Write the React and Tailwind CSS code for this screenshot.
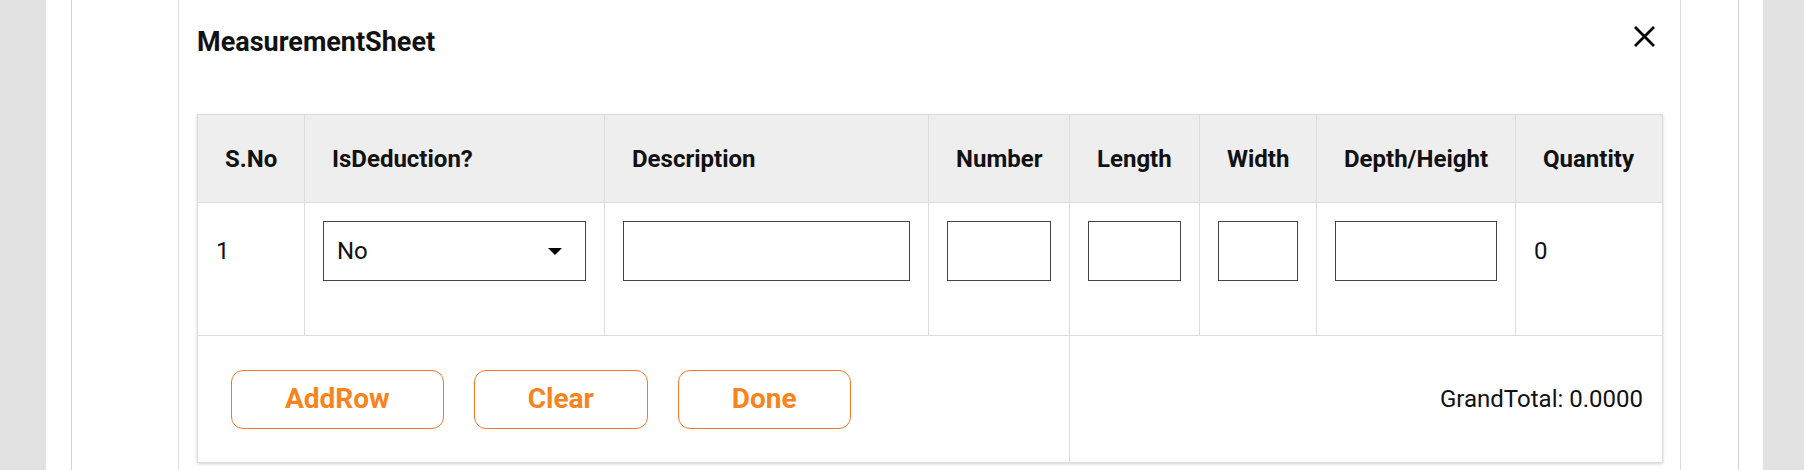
import React from 'react';

const cols = [
  { label: 'S.No', w: 'w-[107px]' },
  { label: 'IsDeduction?', w: 'w-[300px]' },
  { label: 'Description', w: 'w-[324px]' },
  { label: 'Number', w: 'w-[141px]' },
  { label: 'Length', w: 'w-[130px]' },
  { label: 'Width', w: 'w-[117px]' },
  { label: 'Depth/Height', w: 'w-[199px]' },
  { label: 'Quantity', w: 'w-[147px]' },
];

function TextBox() {
  return <input type="text" className="block w-full h-[60px] border border-[#444444] bg-white outline-none" />;
}

export default function App() {
  return (
    <div className="h-[470px] w-[1804px] overflow-hidden bg-[#e2e2e2] flex font-['Roboto','Liberation_Sans',sans-serif] text-[#111111]">
      <div className="ml-[46px] w-[1717px] bg-white flex">
        <div className="ml-[25px] w-[1668px] border-x border-[#d4d4d4] flex">
          <div className="ml-[106px] w-[1503px] border-x border-[#dadada] px-[18px]">
            <div className="flex items-start justify-between pt-[22px]">
              <h1 className="text-[27px] leading-[40px] font-bold">MeasurementSheet</h1>
              <button className="mt-[4px] mr-[7px]">
                <svg width="21" height="21" viewBox="0 0 21 21" fill="none" stroke="#000" strokeWidth="2.8">
                  <path d="M1 1 L20 20 M20 1 L1 20" />
                </svg>
              </button>
            </div>

            <table className="mt-[52px] w-[1465px] table-fixed border-collapse shadow-[0_1px_3px_rgba(0,0,0,0.18)]">
              <colgroup>
                {cols.map((c) => (
                  <col key={c.label} className={c.w} />
                ))}
              </colgroup>
              <thead>
                <tr className="bg-[#eeeeee] h-[88px]">
                  {cols.map((c) => (
                    <th key={c.label} className="border border-[#dddddd] px-[27px] text-left text-[24px] font-bold leading-[36px] whitespace-nowrap">
                      {c.label}
                    </th>
                  ))}
                </tr>
              </thead>
              <tbody>
                <tr className="h-[133px]">
                  <td className="border border-[#dddddd] p-[18px] align-top">
                    <div className="h-[60px] flex items-center text-[24px]">1</div>
                  </td>
                  <td className="border border-[#dddddd] p-[18px] align-top">
                    <div className="h-[60px] w-full border border-[#444444] flex items-center justify-between pl-[13px] pr-[23px] text-[24px]">
                      <span>No</span>
                      <svg width="14" height="7" viewBox="0 0 14 7">
                        <path d="M0 0 L14 0 L7 7 Z" fill="#000" />
                      </svg>
                    </div>
                  </td>
                  <td className="border border-[#dddddd] p-[18px] align-top"><TextBox /></td>
                  <td className="border border-[#dddddd] p-[18px] align-top"><TextBox /></td>
                  <td className="border border-[#dddddd] p-[18px] align-top"><TextBox /></td>
                  <td className="border border-[#dddddd] p-[18px] align-top"><TextBox /></td>
                  <td className="border border-[#dddddd] p-[18px] align-top"><TextBox /></td>
                  <td className="border border-[#dddddd] p-[18px] align-top">
                    <div className="h-[60px] flex items-center text-[24px]">0</div>
                  </td>
                </tr>
                <tr className="h-[127px]">
                  <td colSpan={4} className="border border-[#dddddd] pl-[33px]">
                    <div className="flex gap-[30px]">
                      {['AddRow', 'Clear', 'Done'].map((b) => (
                        <button key={b} className="h-[59px] px-[53px] border border-[#f3792b] rounded-[12px] text-[28px] font-bold text-[#f7841c] bg-white">
                          {b}
                        </button>
                      ))}
                    </div>
                  </td>
                  <td colSpan={4} className="border border-[#dddddd] pr-[19px] text-right text-[24px]">
                    GrandTotal: 0.0000
                  </td>
                </tr>
              </tbody>
            </table>
          </div>
        </div>
      </div>
    </div>
  );
}
